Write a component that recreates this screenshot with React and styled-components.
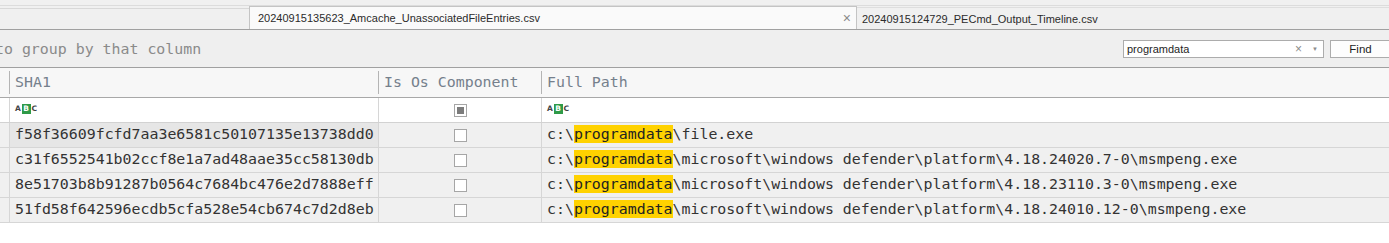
import React from 'react'
import styled, { createGlobalStyle } from 'styled-components'

const Global = createGlobalStyle`
  html, body { margin:0; padding:0; background:#fff; overflow:hidden; }
  body { font-family:"Liberation Sans", Arial, sans-serif; }
`

const rows = [
  { sha: 'f58f36609fcfd7aa3e6581c50107135e13738dd0', rest: '\\file.exe', focused: true },
  { sha: 'c31f6552541b02ccf8e1a7ad48aae35cc58130db', rest: '\\microsoft\\windows defender\\platform\\4.18.24020.7-0\\msmpeng.exe' },
  { sha: '8e51703b8b91287b0564c7684bc476e2d7888eff', rest: '\\microsoft\\windows defender\\platform\\4.18.23110.3-0\\msmpeng.exe' },
  { sha: '51fd58f642596ecdb5cfa528e54cb674c7d2d8eb', rest: '\\microsoft\\windows defender\\platform\\4.18.24010.12-0\\msmpeng.exe' },
]

export default function App() {
  return (
    <Page>
      <Global />
      <TabBar>
        <Tabs>
          <TabSpacer />
          <Tab active>
            <span>20240915135623_Amcache_UnassociatedFileEntries.csv</span>
            <Close>×</Close>
          </Tab>
          <Tab>
            <span>20240915124729_PECmd_Output_Timeline.csv</span>
          </Tab>
        </Tabs>
      </TabBar>
      <GroupPanel>
        <GroupHint>to group by that column</GroupHint>
        <SearchArea>
          <SearchBox>
            <SearchText>programdata</SearchText>
            <SearchIcon>×</SearchIcon>
            <SearchIcon small>▼</SearchIcon>
          </SearchBox>
          <FindButton>Find</FindButton>
        </SearchArea>
      </GroupPanel>
      <HeaderRow>
        <HeadCell />
        <HeadCell>SHA1</HeadCell>
        <HeadCell>Is Os Component</HeadCell>
        <HeadCell last>Full Path</HeadCell>
      </HeaderRow>
      <FilterRow>
        <Cell />
        <Cell><AbcIcon /></Cell>
        <Cell center><Check indeterminate /></Cell>
        <Cell last><AbcIcon /></Cell>
      </FilterRow>
      {rows.map((r) => (
        <DataRow key={r.sha}>
          <Cell />
          <Cell focused={r.focused}>{r.sha}</Cell>
          <Cell center><Check /></Cell>
          <Cell last>c:\<Mark>programdata</Mark>{r.rest}</Cell>
        </DataRow>
      ))}
    </Page>
  )
}

function AbcIcon() {
  return (
    <Abc>
      <span>A</span>
      <AbcB>B</AbcB>
      <span>C</span>
    </Abc>
  )
}

const Page = styled.div`
  width:1389px;
  height:243px;
  background:#fff;
`
const TabBar = styled.div`
  background:#f0f0f0;
  padding-top:5px;
`
const Tabs = styled.div`
  display:flex;
  height:23px;
  border-top:1px solid #dcdcdc;
  border-bottom:1px solid #a0a0a0;
  font-size:11px;
  color:#2b2b2b;
`
const TabSpacer = styled.div`
  width:249px;
  margin-top:2px;
  border-top:1px solid #d8d8d8;
`
const Tab = styled.div`
  display:flex;
  align-items:center;
  justify-content:space-between;
  box-sizing:border-box;
  padding:0 5px 0 ${p => p.active ? '8px' : '5px'};
  width:${p => p.active ? '608px' : 'auto'};
  flex:${p => p.active ? 'none' : '1'};
  background:${p => p.active ? '#fafafa' : '#f0f0f0'};
  border:1px solid #c4c4c4;
  border-bottom:none;
  border-right:${p => p.active ? '1px solid #c4c4c4' : 'none'};
  border-left:${p => p.active ? '1px solid #c4c4c4' : 'none'};
  margin-top:${p => p.active ? '0' : '1px'};
  border-top-color:${p => p.active ? '#c4c4c4' : '#dedede'};
`
const Close = styled.span`
  color:#8a8a8a;
  font-size:14px;
`
const GroupPanel = styled.div`
  height:37px;
  background:#efefef;
  border-bottom:1px solid #a0a0a0;
  display:flex;
  align-items:center;
  justify-content:space-between;
  overflow:hidden;
`
const GroupHint = styled.div`
  margin-left:-5px;
  font-family:"DejaVu Sans Mono", monospace;
  font-size:14.9px;
  color:#8a8a8a;
`
const SearchArea = styled.div`
  display:flex;
  align-items:center;
  gap:6px;
  margin-right:-2px;
`
const SearchBox = styled.div`
  width:201px;
  height:18px;
  box-sizing:border-box;
  background:#fff;
  border:1px solid #acacac;
  display:flex;
  align-items:center;
  padding:0 5px 0 3px;
  font-size:11px;
`
const SearchText = styled.span`
  flex:1;
  color:#1e1e1e;
`
const SearchIcon = styled.span`
  color:#8c8c8c;
  font-size:${p => p.small ? '6px' : '12px'};
  margin-left:${p => p.small ? '10px' : '0'};
`
const FindButton = styled.button`
  width:61px;
  height:18px;
  box-sizing:border-box;
  background:#fdfdfd;
  border:1px solid #acacac;
  font-family:"Liberation Sans", Arial, sans-serif;
  font-size:11.5px;
  color:#1e1e1e;
  padding:0;
`
const gridCols = `
  display:grid;
  grid-template-columns:10px 369px 163px 1fr;
`
const HeaderRow = styled.div`
  ${gridCols}
  height:29px;
  background:#f7f7f7;
  border-bottom:1px solid #a8a8a8;
`
const HeadCell = styled.div`
  display:flex;
  align-items:center;
  padding:0 0 2px 5px;
  font-family:"DejaVu Sans Mono", monospace;
  font-size:14.9px;
  color:#75808c;
  white-space:nowrap;
  overflow:hidden;
  background:${p => p.last ? 'none' : 'linear-gradient(#b4b4b4,#b4b4b4) right 3px / 1px 23px no-repeat'};
`
const FilterRow = styled.div`
  ${gridCols}
  height:24px;
  background:#fff;
  border-bottom:1px solid #d2d2d2;
`
const DataRow = styled.div`
  ${gridCols}
  height:24px;
  background:#f0f0f0;
  border-bottom:1px solid #d6d6d6;
`
const Cell = styled.div`
  display:flex;
  align-items:center;
  justify-content:${p => p.center ? 'center' : 'flex-start'};
  box-sizing:border-box;
  padding:0 0 ${p => p.center ? '0' : '2px'} ${p => p.center ? '0' : '5px'};
  border-right:${p => p.last ? 'none' : '1px solid #d6d6d6'};
  background:${p => p.focused ? '#e6e6e6' : 'transparent'};
  font-family:"DejaVu Sans Mono", monospace;
  font-size:14.9px;
  color:#333;
  white-space:pre;
  overflow:hidden;
`
const Mark = styled.span`
  background:#ffd200;
  color:#222;
`
const Check = styled.div`
  width:13px;
  height:13px;
  box-sizing:border-box;
  border:1px solid #a6a6a6;
  background:#fff;
  display:flex;
  align-items:center;
  justify-content:center;
  &::after{
    content:'';
    display:${p => p.indeterminate ? 'block' : 'none'};
    width:7px;
    height:7px;
    background:#7c7c7c;
  }
`
const Abc = styled.div`
  display:flex;
  align-items:center;
  gap:1px;
  font-family:"DejaVu Sans", sans-serif;
  font-size:7.5px;
  font-weight:bold;
  color:#444;
  line-height:8px;
`
const AbcB = styled.span`
  background:#2f9a48;
  color:#fff;
  padding:1px 1.5px;
`
